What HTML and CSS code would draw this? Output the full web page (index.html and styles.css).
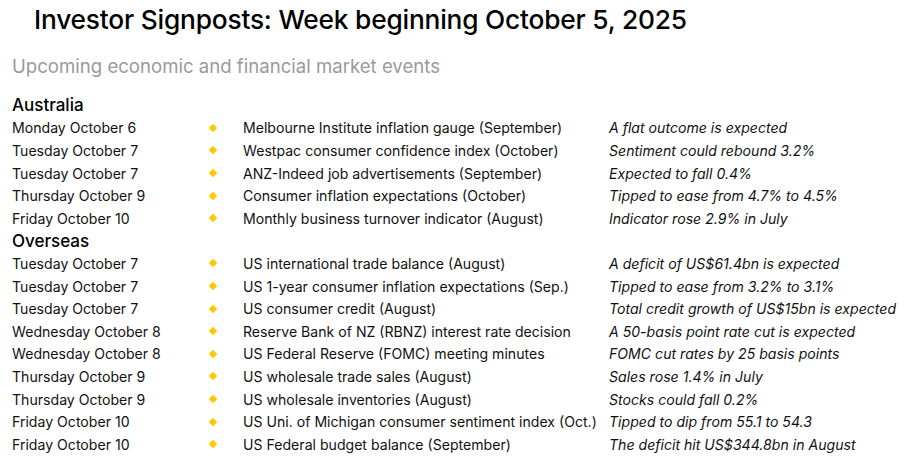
FILE: index.html
```html
<!DOCTYPE html>
<html lang="en">
<head>
<meta charset="utf-8">
<title>Investor Signposts</title>
<link rel="stylesheet" href="styles.css">
</head>
<body>
<div class="page">
  <h1 class="title">Investor Signposts: Week beginning October 5, 2025</h1>
  <p class="subtitle">Upcoming economic and financial market events</p>
  <div class="rows">
    <h2 class="region">Australia</h2>
    <div class="row"><span class="date">Monday October 6</span><span class="dot"></span><span class="event">Melbourne Institute inflation gauge (September)</span><span class="note">A flat outcome is expected</span></div>
    <div class="row"><span class="date">Tuesday October 7</span><span class="dot"></span><span class="event">Westpac consumer confidence index (October)</span><span class="note">Sentiment could rebound 3.2%</span></div>
    <div class="row"><span class="date">Tuesday October 7</span><span class="dot"></span><span class="event">ANZ-Indeed job advertisements (September)</span><span class="note">Expected to fall 0.4%</span></div>
    <div class="row"><span class="date">Thursday October 9</span><span class="dot"></span><span class="event">Consumer inflation expectations (October)</span><span class="note">Tipped to ease from 4.7% to 4.5%</span></div>
    <div class="row"><span class="date">Friday October 10</span><span class="dot"></span><span class="event">Monthly business turnover indicator (August)</span><span class="note">Indicator rose 2.9% in July</span></div>
    <h2 class="region">Overseas</h2>
    <div class="row"><span class="date">Tuesday October 7</span><span class="dot"></span><span class="event">US international trade balance (August)</span><span class="note">A deficit of US$61.4bn is expected</span></div>
    <div class="row"><span class="date">Tuesday October 7</span><span class="dot"></span><span class="event">US 1-year consumer inflation expectations (Sep.)</span><span class="note">Tipped to ease from 3.2% to 3.1%</span></div>
    <div class="row"><span class="date">Tuesday October 7</span><span class="dot"></span><span class="event">US consumer credit (August)</span><span class="note">Total credit growth of US$15bn is expected</span></div>
    <div class="row"><span class="date">Wednesday October 8</span><span class="dot"></span><span class="event">Reserve Bank of NZ (RBNZ) interest rate decision</span><span class="note">A 50-basis point rate cut is expected</span></div>
    <div class="row"><span class="date">Wednesday October 8</span><span class="dot"></span><span class="event">US Federal Reserve (FOMC) meeting minutes</span><span class="note">FOMC cut rates by 25 basis points</span></div>
    <div class="row"><span class="date">Thursday October 9</span><span class="dot"></span><span class="event">US wholesale trade sales (August)</span><span class="note">Sales rose 1.4% in July</span></div>
    <div class="row"><span class="date">Thursday October 9</span><span class="dot"></span><span class="event">US wholesale inventories (August)</span><span class="note">Stocks could fall 0.2%</span></div>
    <div class="row"><span class="date">Friday October 10</span><span class="dot"></span><span class="event">US Uni. of Michigan consumer sentiment index (Oct.)</span><span class="note">Tipped to dip from 55.1 to 54.3</span></div>
    <div class="row"><span class="date">Friday October 10</span><span class="dot"></span><span class="event">US Federal budget balance (September)</span><span class="note">The deficit hit US$344.8bn in August</span></div>
  </div>
</div>
</body>
</html>
```

FILE: styles.css
```css
html, body {
  margin: 0;
  padding: 0;
  background: #ffffff;
}
body {
  font-family: Inter, "Liberation Sans", sans-serif;
  color: #111;
}
.page {
  padding: 0 0 0 12px;
}
.title {
  margin: 0;
  padding: 3px 0 0 22px;
  font-size: 26.3px;
  font-weight: 500;
  line-height: 34px;
  letter-spacing: -0.2px;
  color: #000;
}
.subtitle {
  margin: 16px 0 0 0;
  font-size: 18.6px;
  font-weight: 400;
  line-height: 26px;
  color: #9a9a9a;
}
.rows {
  display: flex;
  flex-direction: column;
  margin-top: 15px;
}
.region {
  margin: 0;
  height: 22.6px;
  font-size: 17px;
  font-weight: 500;
  line-height: 22.6px;
  color: #000;
}
.row {
  display: grid;
  grid-template-columns: 196px 35px 366px 1fr;
  align-items: center;
  height: 22.6px;
  font-size: 14.1px;
  white-space: nowrap;
}
.dot {
  width: 6px;
  height: 6px;
  background: #ffc800;
  transform: rotate(45deg);
  margin-left: 2px;
}
.note {
  font-style: italic;
}
```
